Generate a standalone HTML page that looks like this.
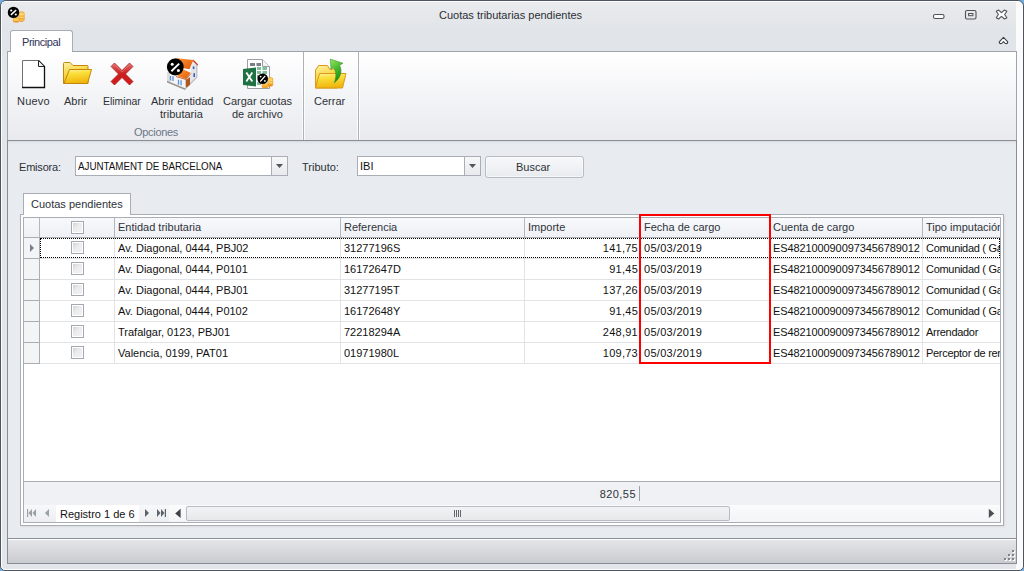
<!DOCTYPE html>
<html><head><meta charset="utf-8">
<style>
*{box-sizing:border-box;margin:0;padding:0}
html,body{width:1024px;height:571px;overflow:hidden;background:#6fb0e6}
body{position:relative;font-family:"Liberation Sans",sans-serif;font-size:11px;color:#2e3238}
.a{position:absolute}
.t{position:absolute;white-space:nowrap;line-height:13px}
</style></head><body>
<!-- window frame -->
<div class="a" style="left:0;top:0;width:1024px;height:571px;border:1px solid #4d5560;border-radius:6px 6px 5px 5px;background:#e2e5e9;overflow:hidden">
  <div class="a" style="left:0;top:0;width:1022px;height:569px;border:1px solid #fdfdfd;border-radius:5px 5px 4px 4px"></div>
</div>
<!-- title bar -->
<div class="a" style="left:2px;top:2px;width:1014px;height:49px;background:linear-gradient(#e9ebee,#e1e4e8 30px,#e1e4e8)"></div>
<div class="a" style="left:1016px;top:2px;width:6px;height:567px;background:#fbfbfc;border-radius:0 4px 3px 0"></div>
<div class="t" style="left:439px;top:9px;font-size:11px;color:#2b2f35">Cuotas tributarias pendientes</div>

<!-- ribbon tab -->
<div class="a" style="left:10px;top:30px;width:63px;height:23px;background:#fff;border:1px solid #a8adb5;border-bottom:none;border-radius:3px 3px 0 0"></div>
<div class="t" style="left:22px;top:36px;color:#2f3458;letter-spacing:-0.45px">Principal</div>
<!-- ribbon body -->
<div class="a" style="left:7px;top:51px;width:1010px;height:90px;border:1px solid #9fa4ac;border-bottom:none;background:linear-gradient(#ffffff,#fcfcfd 12px,#eceef1 70px,#e8eaed)"></div>
<div class="a" style="left:11px;top:51px;width:61px;height:1px;background:#fff"></div>
<div class="a" style="left:302px;top:52px;width:3px;height:88px;background:linear-gradient(90deg,rgba(255,255,255,.8) 33%,#adb2b9 33%,#adb2b9 67%,rgba(255,255,255,.8) 67%)"></div>
<div class="a" style="left:357px;top:52px;width:3px;height:88px;background:linear-gradient(90deg,rgba(255,255,255,.8) 33%,#adb2b9 33%,#adb2b9 67%,rgba(255,255,255,.8) 67%)"></div>

<div class="t" style="left:17px;top:95px;letter-spacing:0.2px">Nuevo</div>
<div class="t" style="left:64px;top:95px">Abrir</div>
<div class="t" style="left:103px;top:95px;transform:scaleX(0.95);transform-origin:0 0">Eliminar</div>
<div class="t" style="left:151px;top:95px">Abrir entidad</div>
<div class="t" style="left:160px;top:108px">tributaria</div>
<div class="t" style="left:223px;top:95px">Cargar cuotas</div>
<div class="t" style="left:232px;top:108px">de archivo</div>
<div class="t" style="left:314px;top:95px">Cerrar</div>
<div class="t" style="left:134px;top:126px;color:#6d7689;letter-spacing:-0.3px">Opciones</div>

<!-- content area -->
<div class="a" style="left:7px;top:140px;width:1010px;height:424px;border:1px solid #888e97;background:#e8ebef"></div>
<div class="a" style="left:8px;top:539px;width:1008px;height:24px;border-top:1px solid #fff;background:linear-gradient(#e3e5e8,#c9cbcf)"></div>
<div class="a" style="left:8px;top:538px;width:1008px;height:1px;background:#8c9199"></div>

<div class="a" style="left:8px;top:141px;width:1008px;height:3px;background:linear-gradient(#d9dce1,#e8ebef)"></div>
<!-- filters -->
<div class="t" style="left:19px;top:161px;letter-spacing:-0.2px">Emisora:</div>
<div class="a" style="left:75px;top:156px;width:213px;height:20px;border:1px solid #a9aeb6;background:#fff"></div>
<div class="t" style="left:78px;top:160px;color:#111;transform:scaleX(0.89);transform-origin:0 0">AJUNTAMENT DE BARCELONA</div>
<div class="a" style="left:271px;top:157px;width:16px;height:18px;border-left:1px solid #a9aeb6;background:linear-gradient(#f6f7f9,#e8eaed)"></div>
<div class="t" style="left:302px;top:161px">Tributo:</div>
<div class="a" style="left:357px;top:156px;width:124px;height:20px;border:1px solid #a9aeb6;background:#fff"></div>
<div class="t" style="left:360px;top:160px;color:#111">IBI</div>
<div class="a" style="left:464px;top:157px;width:16px;height:18px;border-left:1px solid #a9aeb6;background:linear-gradient(#f6f7f9,#e8eaed)"></div>
<div class="a" style="left:485px;top:156px;width:99px;height:22px;border:1px solid #b7bcc3;border-radius:3px;background:linear-gradient(#f6f8fa,#e9ecef);box-shadow:inset 0 0 0 1px rgba(255,255,255,.55)"></div>
<div class="t" style="left:516px;top:161px">Buscar</div>

<!-- tab -->
<div class="a" style="left:20px;top:214px;width:984px;height:312px;border:1px solid #a9aeb5;background:#fff;box-shadow:1px 1px 2px rgba(0,0,0,.07)"></div>
<div class="a" style="left:23px;top:193px;width:108px;height:22px;border:1px solid #a9aeb5;border-bottom:none;background:#fff"></div>
<div class="t" style="left:31px;top:198px">Cuotas pendientes</div>

<!-- grid -->
<div class="a" style="left:23px;top:217px;width:978px;height:306px;border:1px solid #a9aeb5;background:#fff"></div>

<!--GRID START-->
<div class="a" style="left:24px;top:218px;width:976px;height:19px;background:linear-gradient(#f8f9fb,#eef0f4)"></div>
<div class="a" style="left:24px;top:237px;width:976px;height:1px;background:#a9aeb5"></div>
<div class="a" style="left:24px;top:238px;width:15px;height:126px;background:#f3f4f6"></div>
<div class="a" style="left:24px;top:258px;width:15px;height:1px;background:#a9aeb5"></div>
<div class="a" style="left:40px;top:258px;width:960px;height:1px;background:#e1e3e7"></div>
<div class="a" style="left:24px;top:279px;width:15px;height:1px;background:#a9aeb5"></div>
<div class="a" style="left:40px;top:279px;width:960px;height:1px;background:#e1e3e7"></div>
<div class="a" style="left:24px;top:300px;width:15px;height:1px;background:#a9aeb5"></div>
<div class="a" style="left:40px;top:300px;width:960px;height:1px;background:#e1e3e7"></div>
<div class="a" style="left:24px;top:321px;width:15px;height:1px;background:#a9aeb5"></div>
<div class="a" style="left:40px;top:321px;width:960px;height:1px;background:#e1e3e7"></div>
<div class="a" style="left:24px;top:342px;width:15px;height:1px;background:#a9aeb5"></div>
<div class="a" style="left:40px;top:342px;width:960px;height:1px;background:#e1e3e7"></div>
<div class="a" style="left:24px;top:363px;width:15px;height:1px;background:#a9aeb5"></div>
<div class="a" style="left:40px;top:363px;width:960px;height:1px;background:#e1e3e7"></div>
<div class="a" style="left:39px;top:218px;width:1px;height:19px;background:#b2b6bd"></div>
<div class="a" style="left:114px;top:218px;width:1px;height:19px;background:#b2b6bd"></div>
<div class="a" style="left:340px;top:218px;width:1px;height:19px;background:#b2b6bd"></div>
<div class="a" style="left:524px;top:218px;width:1px;height:19px;background:#b2b6bd"></div>
<div class="a" style="left:639px;top:218px;width:1px;height:19px;background:#b2b6bd"></div>
<div class="a" style="left:769px;top:218px;width:1px;height:19px;background:#b2b6bd"></div>
<div class="a" style="left:922px;top:218px;width:1px;height:19px;background:#b2b6bd"></div>
<div class="a" style="left:39px;top:238px;width:1px;height:126px;background:#a9aeb5"></div>
<div class="a" style="left:114px;top:238px;width:1px;height:126px;background:#e1e3e7"></div>
<div class="a" style="left:340px;top:238px;width:1px;height:126px;background:#e1e3e7"></div>
<div class="a" style="left:524px;top:238px;width:1px;height:126px;background:#e1e3e7"></div>
<div class="a" style="left:639px;top:238px;width:1px;height:126px;background:#e1e3e7"></div>
<div class="a" style="left:769px;top:238px;width:1px;height:126px;background:#e1e3e7"></div>
<div class="a" style="left:922px;top:238px;width:1px;height:126px;background:#e1e3e7"></div>
<div class="t" style="left:118px;top:221px;width:222px;overflow:hidden;color:#2f333b">Entidad tributaria</div>
<div class="t" style="left:344px;top:221px;width:180px;overflow:hidden;color:#2f333b">Referencia</div>
<div class="t" style="left:528px;top:221px;width:111px;overflow:hidden;color:#2f333b">Importe</div>
<div class="t" style="left:644px;top:221px;width:125px;overflow:hidden;color:#2f333b">Fecha de cargo</div>
<div class="t" style="left:773px;top:221px;width:149px;overflow:hidden;color:#2f333b">Cuenta de cargo</div>
<div class="t" style="left:926px;top:221px;width:74px;overflow:hidden;color:#2f333b">Tipo imputación</div>
<div class="a" style="left:71px;top:221px;width:13px;height:13px;border:1px solid #a3a9b1;background:#fff"><div class="a" style="left:1px;top:1px;width:9px;height:9px;background:linear-gradient(135deg,#d2d3d5,#ececed 45%,#f2f2f3)"></div></div>
<div class="a" style="left:71px;top:241px;width:13px;height:13px;border:1px solid #a3a9b1;background:#fff"><div class="a" style="left:1px;top:1px;width:9px;height:9px;background:linear-gradient(135deg,#d2d3d5,#ececed 45%,#f2f2f3)"></div></div>
<div class="a" style="left:71px;top:262px;width:13px;height:13px;border:1px solid #a3a9b1;background:#fff"><div class="a" style="left:1px;top:1px;width:9px;height:9px;background:linear-gradient(135deg,#d2d3d5,#ececed 45%,#f2f2f3)"></div></div>
<div class="a" style="left:71px;top:283px;width:13px;height:13px;border:1px solid #a3a9b1;background:#fff"><div class="a" style="left:1px;top:1px;width:9px;height:9px;background:linear-gradient(135deg,#d2d3d5,#ececed 45%,#f2f2f3)"></div></div>
<div class="a" style="left:71px;top:304px;width:13px;height:13px;border:1px solid #a3a9b1;background:#fff"><div class="a" style="left:1px;top:1px;width:9px;height:9px;background:linear-gradient(135deg,#d2d3d5,#ececed 45%,#f2f2f3)"></div></div>
<div class="a" style="left:71px;top:325px;width:13px;height:13px;border:1px solid #a3a9b1;background:#fff"><div class="a" style="left:1px;top:1px;width:9px;height:9px;background:linear-gradient(135deg,#d2d3d5,#ececed 45%,#f2f2f3)"></div></div>
<div class="a" style="left:71px;top:346px;width:13px;height:13px;border:1px solid #a3a9b1;background:#fff"><div class="a" style="left:1px;top:1px;width:9px;height:9px;background:linear-gradient(135deg,#d2d3d5,#ececed 45%,#f2f2f3)"></div></div>
<div class="t" style="left:118px;top:242px;width:222px;overflow:hidden;color:#111;">Av. Diagonal, 0444, PBJ02</div>
<div class="t" style="left:344px;top:242px;width:180px;overflow:hidden;color:#111;">31277196S</div>
<div class="t" style="right:386px;top:242px;color:#111;letter-spacing:0.25px">141,75</div>
<div class="t" style="left:644px;top:242px;width:125px;overflow:hidden;color:#111;letter-spacing:0.3px;">05/03/2019</div>
<div class="t" style="left:773px;top:242px;width:149px;overflow:hidden;color:#111;letter-spacing:-0.1px;">ES4821000900973456789012</div>
<div class="t" style="left:926px;top:242px;width:74px;overflow:hidden;color:#111;letter-spacing:-0.3px;">Comunidad ( Gastos</div>
<div class="t" style="left:118px;top:263px;width:222px;overflow:hidden;color:#111;">Av. Diagonal, 0444, P0101</div>
<div class="t" style="left:344px;top:263px;width:180px;overflow:hidden;color:#111;">16172647D</div>
<div class="t" style="right:386px;top:263px;color:#111;letter-spacing:0.25px">91,45</div>
<div class="t" style="left:644px;top:263px;width:125px;overflow:hidden;color:#111;letter-spacing:0.3px;">05/03/2019</div>
<div class="t" style="left:773px;top:263px;width:149px;overflow:hidden;color:#111;letter-spacing:-0.1px;">ES4821000900973456789012</div>
<div class="t" style="left:926px;top:263px;width:74px;overflow:hidden;color:#111;letter-spacing:-0.3px;">Comunidad ( Gastos</div>
<div class="t" style="left:118px;top:284px;width:222px;overflow:hidden;color:#111;">Av. Diagonal, 0444, PBJ01</div>
<div class="t" style="left:344px;top:284px;width:180px;overflow:hidden;color:#111;">31277195T</div>
<div class="t" style="right:386px;top:284px;color:#111;letter-spacing:0.25px">137,26</div>
<div class="t" style="left:644px;top:284px;width:125px;overflow:hidden;color:#111;letter-spacing:0.3px;">05/03/2019</div>
<div class="t" style="left:773px;top:284px;width:149px;overflow:hidden;color:#111;letter-spacing:-0.1px;">ES4821000900973456789012</div>
<div class="t" style="left:926px;top:284px;width:74px;overflow:hidden;color:#111;letter-spacing:-0.3px;">Comunidad ( Gastos</div>
<div class="t" style="left:118px;top:305px;width:222px;overflow:hidden;color:#111;">Av. Diagonal, 0444, P0102</div>
<div class="t" style="left:344px;top:305px;width:180px;overflow:hidden;color:#111;">16172648Y</div>
<div class="t" style="right:386px;top:305px;color:#111;letter-spacing:0.25px">91,45</div>
<div class="t" style="left:644px;top:305px;width:125px;overflow:hidden;color:#111;letter-spacing:0.3px;">05/03/2019</div>
<div class="t" style="left:773px;top:305px;width:149px;overflow:hidden;color:#111;letter-spacing:-0.1px;">ES4821000900973456789012</div>
<div class="t" style="left:926px;top:305px;width:74px;overflow:hidden;color:#111;letter-spacing:-0.3px;">Comunidad ( Gastos</div>
<div class="t" style="left:118px;top:326px;width:222px;overflow:hidden;color:#111;">Trafalgar, 0123, PBJ01</div>
<div class="t" style="left:344px;top:326px;width:180px;overflow:hidden;color:#111;">72218294A</div>
<div class="t" style="right:386px;top:326px;color:#111;letter-spacing:0.25px">248,91</div>
<div class="t" style="left:644px;top:326px;width:125px;overflow:hidden;color:#111;letter-spacing:0.3px;">05/03/2019</div>
<div class="t" style="left:773px;top:326px;width:149px;overflow:hidden;color:#111;letter-spacing:-0.1px;">ES4821000900973456789012</div>
<div class="t" style="left:926px;top:326px;width:74px;overflow:hidden;color:#111;letter-spacing:-0.3px;">Arrendador</div>
<div class="t" style="left:118px;top:347px;width:222px;overflow:hidden;color:#111;">Valencia, 0199, PAT01</div>
<div class="t" style="left:344px;top:347px;width:180px;overflow:hidden;color:#111;">01971980L</div>
<div class="t" style="right:386px;top:347px;color:#111;letter-spacing:0.25px">109,73</div>
<div class="t" style="left:644px;top:347px;width:125px;overflow:hidden;color:#111;letter-spacing:0.3px;">05/03/2019</div>
<div class="t" style="left:773px;top:347px;width:149px;overflow:hidden;color:#111;letter-spacing:-0.1px;">ES4821000900973456789012</div>
<div class="t" style="left:926px;top:347px;width:74px;overflow:hidden;color:#111;letter-spacing:-0.3px;">Perceptor de rentas</div>
<div class="a" style="left:30px;top:244px;width:0;height:0;border-left:4px solid #7b818c;border-top:4px solid transparent;border-bottom:4px solid transparent"></div>
<div class="a" style="left:40px;top:238px;width:960px;height:20px;border:1px dotted #000"></div>
<div class="a" style="left:639px;top:214px;width:132px;height:150px;border:2px solid #f00"></div>
<div class="a" style="left:24px;top:481px;width:976px;height:1px;background:#a9aeb5"></div>
<div class="a" style="left:24px;top:482px;width:976px;height:23px;background:#eff1f4"></div>
<div class="t" style="right:388px;top:488px;color:#2f333b;letter-spacing:0.45px">820,55</div>
<div class="a" style="left:639px;top:486px;width:1px;height:15px;background:#9aa0a8"></div>
<div class="a" style="left:24px;top:505px;width:976px;height:17px;background:linear-gradient(#f7f8f9,#eceef1)"></div>
<div class="a" style="left:56px;top:505px;width:83px;height:17px;background:#fff"></div>
<div class="t" style="left:60px;top:508px;color:#111">Registro 1 de 6</div>
<div class="a" style="left:169px;top:505px;width:831px;height:17px;background:linear-gradient(#fafbfb,#f3f4f6)"></div>
<div class="a" style="left:186px;top:506px;width:544px;height:15px;border:1px solid #b9bdc3;border-radius:2px;background:linear-gradient(#f2f3f4,#e6e8ea)"></div>
<!--GRID END-->
<!--ICONS START-->
<svg class="a" style="left:0;top:0" width="1024" height="571" viewBox="0 0 1024 571">
<defs>
<linearGradient id="fb" x1="0" y1="0" x2="0.3" y2="1"><stop offset="0" stop-color="#fff2a8"/><stop offset="0.5" stop-color="#f9d84a"/><stop offset="1" stop-color="#eeb21a"/></linearGradient>
<linearGradient id="ff" x1="0" y1="0" x2="0.2" y2="1"><stop offset="0" stop-color="#fff0a0"/><stop offset="0.35" stop-color="#fbdf3a"/><stop offset="1" stop-color="#f0b60e"/></linearGradient>
<linearGradient id="xr" x1="0" y1="0" x2="0" y2="1"><stop offset="0" stop-color="#e56a6a"/><stop offset="0.5" stop-color="#c82020"/><stop offset="1" stop-color="#d71818"/></linearGradient>
<linearGradient id="ga" x1="0" y1="0" x2="0.4" y2="1"><stop offset="0" stop-color="#96e858"/><stop offset="0.5" stop-color="#4cbc30"/><stop offset="1" stop-color="#1a8a16"/></linearGradient>
<linearGradient id="coin" x1="0" y1="0" x2="0" y2="1"><stop offset="0" stop-color="#ffd860"/><stop offset="1" stop-color="#f09018"/></linearGradient>
<linearGradient id="roof" x1="0" y1="0" x2="1" y2="1"><stop offset="0" stop-color="#ff9a3a"/><stop offset="1" stop-color="#e05a0a"/></linearGradient>
</defs>
<!-- app icon -->
<g>
 <rect x="18.8" y="11.8" width="5.4" height="9.6" rx="1.8" fill="url(#coin)" stroke="#e8901a" stroke-width="0.6"/>
 <path d="M19.2,14.6h4.6M19.2,17.4h4.6M19.2,20h4.6" stroke="#fff0a0" stroke-width="0.7"/>
 <rect x="13.2" y="17.6" width="6" height="4.6" rx="1.6" fill="url(#coin)" stroke="#e8901a" stroke-width="0.6"/>
 <path d="M13.6,20h5.2" stroke="#fff0a0" stroke-width="0.7"/>
 <circle cx="13.5" cy="12.4" r="5.7" fill="#000"/>
 <path d="M10.9,14.9 L16.2,10" stroke="#fff" stroke-width="1.5"/>
 <circle cx="11.2" cy="10.5" r="1.1" fill="#fff"/><circle cx="15.8" cy="14.5" r="1.1" fill="#fff"/>
</g>
<!-- Nuevo page -->
<g>
 <path d="M22.5,87 V60.5 H38.5 L44.5,66.5 V87.5" fill="#fff" stroke="#707070" stroke-width="1"/>
 <path d="M38.5,60.5 L44.5,66.5 V87.5 H22" fill="none" stroke="#111" stroke-width="1.3"/>
 <path d="M38.5,61 V66.5 H44" fill="#f4f4f4" stroke="#222" stroke-width="1"/>
</g>
<!-- Abrir folder -->
<g stroke="#c5860c" stroke-width="1" stroke-linejoin="round">
 <path d="M63.5,83.5 V63.5 Q63.5,62.5 64.5,62.5 H70 L73,65.5 H87 Q88,65.5 88,66.5 V83.5 Z" fill="url(#fb)"/>
 <path d="M69.5,69.5 H91.5 L87.5,83.5 H64 Z" fill="url(#ff)"/>
</g>
<!-- Eliminar X -->
<g>
 <path d="M111,66.5 L114.5,63 L122,70.5 L129.5,63 L133,66.5 L125.5,74 L133,81.5 L129.5,85 L122,77.5 L114.5,85 L111,81.5 L118.5,74 Z" fill="url(#xr)" stroke="#a31a1a" stroke-width="0.7" stroke-linejoin="round"/>
 <path d="M112.6,66.5 L114.5,64.6 L122,72.1 L129.5,64.6 L131.4,66.5" fill="none" stroke="#ee8a8a" stroke-width="0.8" opacity="0.7"/>
</g>
<!-- house -->
<g>
 <path d="M167,72.5 L176,70 L185,78.5 L185,89.5 L167,81.5 Z" fill="#f4f4f4"/>
 <path d="M167,72.5 L170,71.5 L170,82.8 L167,81.5 Z" fill="#dcdcdc"/>
 <path d="M167,80.8 L185,88.3 L185,90 L167,82.4 Z" fill="#9c958d"/>
 <path d="M185,78.5 L190.9,73.9 L190.9,69.6 L193.4,60.6 L197.3,64.6 L197.3,77.5 L185,90 Z" fill="#e4e5e8"/>
 <path d="M197.3,64.6 L197.3,77.5 L185,90 L185,88.5 L196.3,77 L196.3,65 Z" fill="#b8b9bc"/>
 <path d="M175,58 L193.4,60 L189.5,69.2 L184,68.3 L172,66 Z" fill="url(#roof)"/>
 <path d="M193.4,59.6 L198,64.4 L197.4,65.4 L193.2,61.2 Z" fill="#cc2a18"/>
 <path d="M176,71 L184,69.8 L190.6,72.8 L186,79 L178,76.2 Z" fill="url(#roof)"/>
 <path d="M176,76.5 L186,79.5 L190.8,73.5" fill="none" stroke="#c24a0a" stroke-width="0.8"/>
 <path d="M170.5,76v4.6M173,76.3v4.6M178.5,79.8v5M181.1,80.2v5" stroke="#5a8ee0" stroke-width="1.3"/>
 <path d="M193.6,66.4v2.6M194.2,73.2v3.8" stroke="#2f5fb8" stroke-width="1.6"/>
 <path d="M185.8,80 L190,77.2 V84.8 L185.8,87.8 Z" fill="#b0561e"/>
 <circle cx="175.3" cy="67" r="8.4" fill="#000"/>
 <path d="M171.4,71.2 L179.2,63.6" stroke="#fff" stroke-width="1.9"/>
 <circle cx="172.2" cy="64.2" r="1.5" fill="#fff"/><circle cx="178.4" cy="70.4" r="1.5" fill="#fff"/>
</g>
<!-- excel -->
<g>
 <path d="M247.5,88.5 V59.5 H262.5 L269.5,66.5 V88.5 Z" fill="#fff" stroke="#9ba0a6" stroke-width="1"/>
 <path d="M262.5,59.5 V66.5 H269.5" fill="#f2f2f2" stroke="#9ba0a6" stroke-width="1"/>
 <rect x="250" y="63" width="5" height="3" fill="#7b7f85"/><rect x="256.5" y="63" width="4.5" height="3" fill="#7b7f85"/>
 <path d="M257,67h4v3h-4zM262.5,67h4.5v3h-4.5zM257,71h4v3h-4zM262.5,71h4.5v3h-4.5zM257,75h4v3h-4zM257,82h4v3h-4z" fill="#7fbf98"/>
 <path d="M243,69 L256,67.5 V86.5 L243,85 Z" fill="#1f7244"/>
 <path d="M246.3,72.5 L252.3,81.5 M252.3,72.5 L246.3,81.5" stroke="#fff" stroke-width="1.8"/>
 <rect x="267.8" y="77.6" width="5" height="8.6" rx="1.6" fill="url(#coin)" stroke="#e8901a" stroke-width="0.6"/>
 <path d="M268.2,80.2h4.2M268.2,82.8h4.2" stroke="#fff0a0" stroke-width="0.7"/>
 <rect x="262" y="83.8" width="6.4" height="4" rx="1.4" fill="url(#coin)" stroke="#e8901a" stroke-width="0.6"/>
 <circle cx="262.7" cy="78.7" r="5.3" fill="#000"/>
 <path d="M260.3,81.5 L265.2,75.9" stroke="#fff" stroke-width="1.2"/>
 <circle cx="260.6" cy="76.6" r="0.9" fill="#fff"/><circle cx="264.9" cy="80.9" r="0.9" fill="#fff"/>
</g>
<!-- cerrar -->
<g stroke="#d89a20" stroke-width="1" stroke-linejoin="round">
 <path d="M315.5,88 V70 Q315.5,69 316.5,69 L318.5,65.5 H327.5 L329.5,69 H337 V88 Z" fill="url(#fb)"/>
 <path d="M319.5,73.5 H346 L342.5,88 H315.5 Z" fill="url(#ff)"/>
</g>
<path d="M330.3,59 L343,63.3 L339.6,65.2 C342.8,71.5 340.5,78 334.3,82.8 C336.6,76.5 336.4,71.2 333.2,67.4 L331,69.6 Z" fill="url(#ga)" stroke="#2a8a2a" stroke-width="0.5"/>
<!-- window controls -->
<rect x="933.5" y="14.5" width="10.5" height="4" rx="1.6" fill="#fff" stroke="#4e535a" stroke-width="1.1"/>
<rect x="965.5" y="10.5" width="10.5" height="8.5" rx="1.5" fill="none" stroke="#4e535a" stroke-width="1.1"/>
<rect x="968.6" y="13.5" width="4.3" height="2.2" fill="none" stroke="#4e535a" stroke-width="1"/>
<path d="M996.3,11.2 L998.5,10 L1001.5,12.6 L1004.5,10 L1006.9,11.2 L1004.6,14.5 L1006.9,17.8 L1004.5,19 L1001.5,16.4 L998.5,19 L996.3,17.8 L998.4,14.5 Z" fill="#fff" stroke="#4e535a" stroke-width="1.1" stroke-linejoin="round"/>
<path d="M999.7,41.4 L1003.5,37.4 L1007.3,41.4 Q1008.3,42.8 1006.9,43.5 L1006,43.6 Q1005.2,43.6 1004.7,43 L1003.5,41.6 L1002.3,43 Q1001.8,43.6 1001,43.6 L1000.1,43.5 Q998.7,42.8 999.7,41.4 Z" fill="#fff" stroke="#3a3f46" stroke-width="1.1" stroke-linejoin="round"/>
<!-- combo arrows -->
<path d="M276,164 H283 L279.5,168 Z" fill="#50555c"/>
<path d="M469,164 H476 L472.5,168 Z" fill="#50555c"/>
<!-- navigator -->
<g fill="#9aa0a8">
 <rect x="27" y="509" width="1.2" height="8"/>
 <path d="M32,509 V517 L28.5,513 Z"/><path d="M36,509 V517 L32.5,513 Z"/>
 <path d="M49,509 V517 L45,513 Z"/>
 <path d="M145,509 V517 L149,513 Z" fill="#5d636b"/>
 <g fill="#5d636b"><path d="M157,509 V517 L160.5,513 Z"/><path d="M161,509 V517 L164.5,513 Z"/><rect x="164.8" y="509" width="1.2" height="8"/></g>
</g>
<path d="M180.6,508.8 V518 L175.2,513.4 Z" fill="#3e434a"/>
<path d="M988.8,508.8 V518 L994.3,513.4 Z" fill="#4a4f56"/>
<path d="M454.5,510v7M456.5,510v7M458.5,510v7M460.5,510v7" stroke="#60666e" stroke-width="1"/>
<!-- grip -->
<g fill="#fff"><rect x="1013" y="551" width="2" height="2"/><rect x="1009" y="555" width="2" height="2"/><rect x="1013" y="555" width="2" height="2"/><rect x="1005" y="559" width="2" height="2"/><rect x="1009" y="559" width="2" height="2"/><rect x="1013" y="559" width="2" height="2"/></g>
<g fill="#7d838c"><rect x="1012" y="550" width="2" height="2"/><rect x="1008" y="554" width="2" height="2"/><rect x="1012" y="554" width="2" height="2"/><rect x="1004" y="558" width="2" height="2"/><rect x="1008" y="558" width="2" height="2"/><rect x="1012" y="558" width="2" height="2"/></g>
</svg>

<!--ICONS END-->
</body></html>
